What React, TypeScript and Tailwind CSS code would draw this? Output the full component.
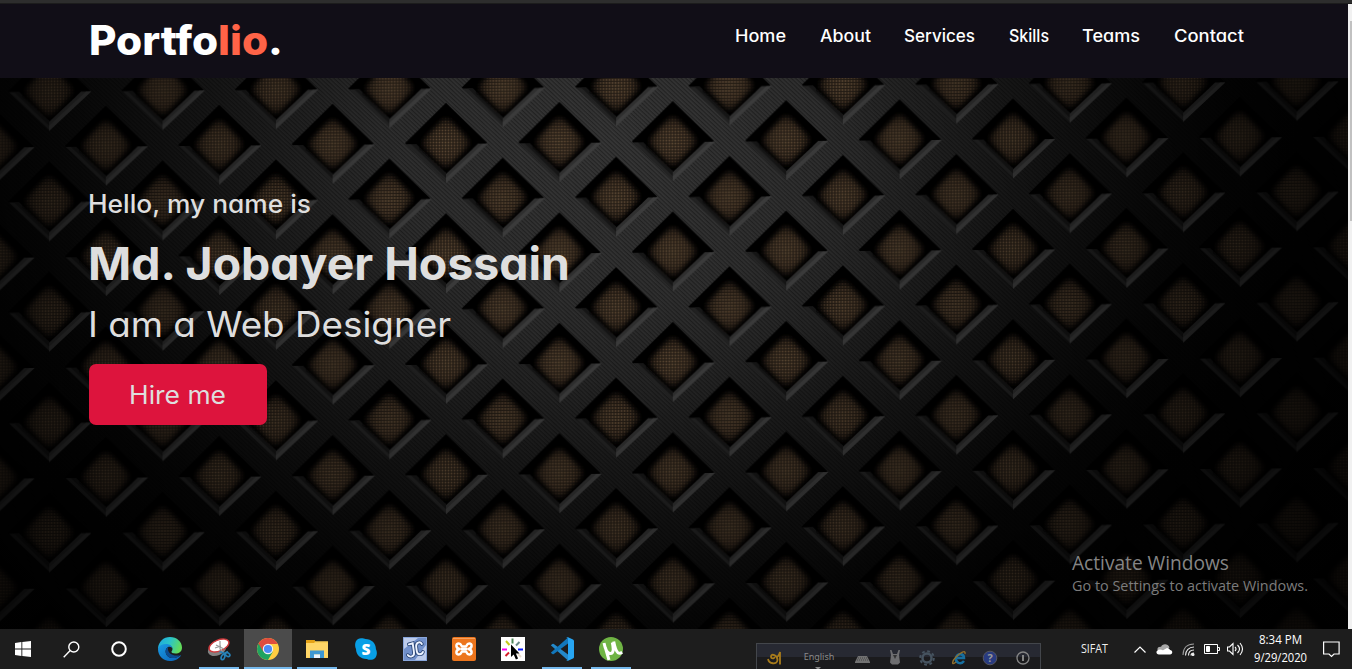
import React from "react";

const navItems = [
  { label: "Home", cls: "w-[51px] mr-[34px]" },
  { label: "About", cls: "w-[51px] mr-[33px]" },
  { label: "Services", cls: "w-[71px] mr-[34px]" },
  { label: "Skills", cls: "w-[40px] mr-[33px]" },
  { label: "Teams", cls: "w-[58px] mr-[34px]" },
  { label: "Contact", cls: "w-[70px]" },
];

/* Text run that is condensed or expanded to an exact width. */
function Fit({ w, h, size, weight, fill = "#fff", base, font = "Inter, sans-serif", children }: {
  w: number; h: number; size: number; weight: number; fill?: string; base: number; font?: string; children: React.ReactNode;
}) {
  return (
    <svg width={w} height={h} className="block overflow-visible">
      <text x="0" y={base} fontFamily={font} fontSize={size} fontWeight={weight} fill={fill} textLength={w} lengthAdjust="spacingAndGlyphs">
        {children}
      </text>
    </svg>
  );
}

function Hole() {
  return (
    <g>
      <path d="M-41 0 L0 -40 L41 0 L0 38Z" fill="#000" />
      <path d="M-40 1 L-30 1 L0 30 L0 39Z" fill="#232323" />
      <path d="M-35 1 L-30 1 L0 30 L0 35Z" fill="#161616" />
      <path d="M42 1 L32 1 L0 31 L0 40Z" fill="#303030" />
      <path d="M42 1 L37 1 L0 35 L0 40Z" fill="#3d3d3d" />
      <path d="M-23 -3 L-3 -24 L3 -24 L23 -3 L23 3 L3 24 L-3 24 L-23 3Z" fill="url(#brown)" filter="url(#soft)" />
      <path d="M-27 -6 L0 -33 L27 -6 L27 6 L0 30 L-27 6Z" fill="url(#weave)" />
    </g>
  );
}

function Lattice() {
  return (
    <svg className="absolute inset-0" width="1348" height="551" viewBox="0 78 1348 551">
      <defs>
        <radialGradient id="brown">
          <stop offset="0" stopColor="#6c563d" />
          <stop offset="0.6" stopColor="#5c4733" />
          <stop offset="1" stopColor="#2a2018" />
        </radialGradient>
        <filter id="soft" x="-30%" y="-30%" width="160%" height="160%">
          <feGaussianBlur stdDeviation="2" />
        </filter>
        <pattern id="weave" width="3" height="3" patternUnits="userSpaceOnUse">
          <path d="M0 1H3M1 0V3" stroke="#000" strokeWidth="1.3" opacity=".64" />
        </pattern>
        <pattern id="rib" width="3" height="3" patternUnits="userSpaceOnUse" patternTransform="rotate(43)">
          <rect width="3" height="3" fill="#373737" />
          <rect width="3" height="1.3" fill="#242424" />
        </pattern>
        <pattern id="cells" width="113.4" height="110.4" patternUnits="userSpaceOnUse" patternTransform="matrix(1 -0.008 0 1 559.4 142)">
          <Hole />
          <g transform="translate(113.4 0)"><Hole /></g>
          <g transform="translate(0 110.4)"><Hole /></g>
          <g transform="translate(113.4 110.4)"><Hole /></g>
          <g transform="translate(56.7 55.2)"><Hole /></g>
        </pattern>
        <radialGradient id="shade" gradientUnits="userSpaceOnUse" cx="0" cy="0" r="1" gradientTransform="translate(610 130) scale(700 590)">
          <stop offset="0" stopColor="#000" stopOpacity="0" />
          <stop offset=".3" stopColor="#000" stopOpacity=".1" />
          <stop offset=".6" stopColor="#000" stopOpacity=".5" />
          <stop offset=".85" stopColor="#000" stopOpacity=".84" />
          <stop offset="1" stopColor="#000" stopOpacity=".96" />
        </radialGradient>
        <radialGradient id="cellShade" gradientUnits="userSpaceOnUse" cx="0" cy="0" r="1" gradientTransform="translate(620 170) scale(800 700)">
          <stop offset="0" stopColor="#000" stopOpacity="0" />
          <stop offset=".3" stopColor="#000" stopOpacity=".06" />
          <stop offset=".6" stopColor="#000" stopOpacity=".34" />
          <stop offset=".8" stopColor="#000" stopOpacity=".6" />
          <stop offset="1" stopColor="#000" stopOpacity=".82" />
        </radialGradient>
      </defs>
      <rect y="78" width="1348" height="551" fill="url(#rib)" />
      <rect y="78" width="1348" height="551" fill="url(#shade)" />
      <rect y="78" width="1348" height="551" fill="url(#cells)" />
      <rect y="78" width="1348" height="551" fill="url(#cellShade)" />
    </svg>
  );
}

const WindowsIcon = () => (
  <svg width="16" height="16" viewBox="0 0 16 16" fill="#fff">
    <path d="M0 2 6.4 1.1V7.5H0ZM7.3 1 16 0V7.5H7.3ZM0 8.4H6.4V14.9L0 14ZM7.3 8.4H16V16L7.3 15Z" />
  </svg>
);
const SearchIcon = () => (
  <svg width="17" height="17" viewBox="0 0 17 17" fill="none" stroke="#fff" strokeWidth="1.4">
    <circle cx="10.8" cy="6" r="5" /><path d="M7.2 9.6.7 16.2" />
  </svg>
);
const CortanaIcon = () => (
  <svg width="16" height="16" viewBox="0 0 16 16" fill="none" stroke="#fff" strokeWidth="2"><circle cx="8" cy="8" r="6.8" /></svg>
);
const EdgeIcon = () => (
  <svg width="24" height="24" viewBox="0 0 24 24">
    <defs>
      <linearGradient id="eg" x1="0" x2="1" y1=".1" y2=".4"><stop stopColor="#1da7e0" /><stop offset=".5" stopColor="#2bc4c9" /><stop offset="1" stopColor="#62dc5a" /></linearGradient>
      <linearGradient id="eb" x1="0" x2="1" y1="0" y2="1"><stop stopColor="#1a9be4" /><stop offset="1" stopColor="#0b62b8" /></linearGradient>
    </defs>
    <path d="M0 11.5C.4 4.8 5.5 0 12 0 19 0 24 5 24 10.5c0 4-3 6-6.500 6-3 0-4.300-1-4-2 .7-.8 1-1.600 1-2.500 0-2.500-2.800-4-6-4C4.500 8 1.500 9.500 0 12.500Z" fill="url(#eg)" />
    <path d="M0 12C1 8.800 4 7 8 7c4 0 6.500 2.200 6.500 5-.3-1.300-1.500-2.200-3-2.200-2.500 0-4.300 2.600-3.800 5.700.5 3.700 4 5.800 7.700 5.500 2.500-.2 5-1.200 6.600-2.600.6-.4 1 0 .7.500C20.600 22 16.500 24 12 24 5 24 0 18.600 0 12Z" fill="url(#eb)" />
    <path d="M7.700 15.500c-.3-2.500.8-4.600 2.700-5.400C9.500 11.500 9.900 14 11.400 15.700c2 2.200 6.400 3.500 10.200 2.500-1.700 2.100-5 3.200-7.700 2.800-3.500-.4-5.800-2.500-6.200-5.500Z" fill="#0c4c91" />
  </svg>
);
const SnipIcon = () => (
  <svg width="24" height="24" viewBox="0 0 24 24">
    <ellipse cx="10" cy="12.500" rx="9.500" ry="6" transform="rotate(-22 10 12.500)" fill="#818181" />
    <ellipse cx="12" cy="8.500" rx="10.500" ry="5.500" transform="rotate(-22 12 8.500)" fill="#fff" stroke="#cf3a3d" strokeWidth="1.400" />
    <path d="M13 4v8l3 3M9 8l8 4M8 11l6-2" stroke="#9a9a9a" strokeWidth="1.200" fill="none" />
    <g fill="none" stroke="#2782b7" strokeWidth="1.700"><ellipse cx="16" cy="20" rx="1.700" ry="2.800" transform="rotate(20 16 20)" /><ellipse cx="20.500" cy="17.500" rx="1.700" ry="2.600" transform="rotate(-55 20.500 17.500)" /><path d="m12.500 14.500 5.500 2 3-2" /></g>
  </svg>
);
const ChromeIcon = () => (
  <svg width="22" height="22" viewBox="0 0 22 22">
    <circle cx="11" cy="11" r="11" fill="#ffcd41" />
    <path d="M11 11 1.500 5.500A11 11 0 0 0 11 22L15.800 13.700Z" fill="#20a360" />
    <path d="M1.470 5.500A11 11 0 0 1 20.530 5.500L20.600 6H11L6.300 13.700Z" fill="#df4c3e" />
    <circle cx="11" cy="11" r="5.200" fill="#f4f4f4" /><circle cx="11" cy="11" r="4.100" fill="#4c8bf5" />
  </svg>
);
const FolderIcon = () => (
  <svg width="22" height="18" viewBox="0 0 22 18">
    <path d="M0 0H8l1.500 1.300H22V18H0Z" fill="#f9ce57" /><path d="M0 0H8l1.500 1.300L8 3H0Z" fill="#e5a216" />
    <path d="M0 3H22V17.500H0Z" fill="#ffd667" /><path d="M4 18V10.500H18V18H14V14.500H8V18Z" fill="#3d97d3" /><path d="M8 14.500h6V18H8Z" fill="#e9f3ff" />
  </svg>
);
const SkypeIcon = () => (
  <svg width="22" height="22" viewBox="0 0 22 22">
    <path d="M6 .3C8 .2 9.500 1 10.500 1c6 0 10.500 4.300 10.400 10 1.500 3 1.200 6.400-.5 8.700-2.300 2.500-6 2.700-8.500 1.300C6 21.300 1 17 1 11 0 9-.3 6 .8 3.500 2 1.400 4 .3 6 .3Z" fill="#089fe6" />
    <text x="11" y="16.500" textAnchor="middle" fontFamily="Open Sans, sans-serif" fontSize="15.500" fontWeight="800" fill="#fff">S</text>
  </svg>
);
const JCIcon = () => (
  <svg width="24" height="24" viewBox="0 0 24 24">
    <rect width="24" height="24" fill="#7190ca" /><path d="M1 1H15L1 12ZM23 8V23H12Z" fill="#bdcceb" /><path d="M.5.5h23v23H.5Z" fill="none" stroke="#8aa7dc" />
    <g fill="none" strokeLinecap="round" transform="rotate(-8 12 12)"><path d="M6.500 6.500 10.500 6v9.500c0 4-5 4.500-6.500 1.500M19.500 8c-1.500-3.500-6-2-6 2v4.500c0 4 4.500 4.500 6 1.500" stroke="#294575" strokeWidth="3.600" /><path d="M6.500 6.500 10.500 6v9.500c0 4-5 4.500-6.500 1.500M19.500 8c-1.500-3.500-6-2-6 2v4.500c0 4 4.500 4.500 6 1.500" stroke="#edf3ff" strokeWidth="1.900" /></g>
  </svg>
);
const XamppIcon = () => (
  <svg width="24" height="24" viewBox="0 0 24 24">
    <rect width="24" height="24" rx="2" fill="#ec751d" /><path d="M1 1.500H23" stroke="#f6a260" />
    <path d="M8.500 12H15.500" stroke="#fff" strokeWidth="2.600" />
    <path d="M7.500 12C3.500 11 3.500 6.500 6.800 6.500 9.500 6.500 9 9 10 9.500H14C15 9 14.500 6.500 17.200 6.500 20.500 6.500 20.500 11 16.500 12 20.500 13 20.500 17.500 17.200 17.500 14.500 17.500 15 15 14 14.500H10C9 15 9.500 17.500 6.800 17.500 3.500 17.500 3.500 13 7.500 12Z" fill="none" stroke="#fff" strokeWidth="2.500" strokeLinejoin="round" />
  </svg>
);
const ClickIcon = () => (
  <svg width="24" height="24" viewBox="0 0 24 24">
    <rect width="24" height="24" fill="#fff" />
    <g strokeWidth="2"><path d="M11.500 1.500v5" stroke="#4c8657" /><path d="m5 4 3.500 4" stroke="#c7c91a" /><path d="m18.500 5-3.500 3.500" stroke="#698989" /><path d="M1 12.500h5" stroke="#ff00f2" /><path d="M17 12.500h5" stroke="#0b1cff" /><path d="m4.500 19 3.500-3.500" stroke="#d61b26" /><path d="M17 17l3 3" stroke="#e7d9ca" /></g>
    <path d="M10 7.500V20l2.700-2.500 2.200 5 2.200-1-2.200-4.900h3.600Z" fill="#000" />
  </svg>
);
const CodeIcon = () => (
  <svg width="24" height="24" viewBox="0 0 24 24">
    <path d="M.8 8.300 2.400 6.900q.7-.5 1.400 0L18 17.500V23.500Z" fill="#2489ca" />
    <path d="M.8 15.700 2.400 17.100q.7.500 1.400 0L18 6.500V.5Z" fill="#1277bb" />
    <path d="M17.500 0 23 2.500q1 .5 1 1.500V20q0 1-1 1.500L17.500 24q-1 .2-1.600-.5 2.100.6 2.100-1.500V2q0-2.100-2.100-1.500.6-.7 1.600-.5Z" fill="#27a5f2" />
  </svg>
);
const TorrentIcon = () => (
  <svg width="24" height="24" viewBox="0 0 24 24">
    <circle cx="12" cy="12" r="12" fill="#6fb444" /><path d="M5 6c1.500 7 3 10.500 6.500 10.500S14.500 11 13.300 5.500M14.700 4.500c1 5 2.500 10 4.300 11.200 1.300.8 3 .3 4.200-.5M6.500 11l3.500 12" fill="none" stroke="#fff" strokeWidth="3" />
  </svg>
);

const tasks = [
  { icon: <EdgeIcon />, open: false }, { icon: <SnipIcon />, open: true },
  { icon: <ChromeIcon />, open: true, active: true }, { icon: <FolderIcon />, open: true },
  { icon: <SkypeIcon />, open: false }, { icon: <JCIcon />, open: false },
  { icon: <XamppIcon />, open: false }, { icon: <ClickIcon />, open: false },
  { icon: <CodeIcon />, open: true }, { icon: <TorrentIcon />, open: true },
];

function LanguageBar() {
  return (
    <div className="ml-[121px] mt-[14px] flex h-[26px] w-[285px] shrink-0 items-center border border-b-0 border-[#43464b] bg-linear-to-b from-[#272932] from-50% to-[#1b1b1d] to-50% pt-[2px]">
      <svg className="ml-[10px]" width="15" height="14" viewBox="0 0 15 14" fill="none" stroke="#a77b1b" strokeWidth="1.800"><path d="M1 8c1 5 9 6 9.500 1C10.500 4 4 2 4 5.500 4 8 7.500 8 7.500 6M9.500 6C11 6 12 4 13 1v12.500" /></svg>
      <div className="relative ml-[21px] mb-[1px] w-[32px] text-center font-[Noto_Sans,sans-serif] text-[9px] text-[#8a8a8a]">English
        <svg className="absolute left-[12px] top-[17px]" width="6" height="3"><path d="M0 0h6L3 3Z" fill="#888" /></svg>
      </div>
      <svg className="ml-[20px] mt-1" width="16" height="8"><path d="M3 0h9l3 6v1H0V6Z" fill="#727272" /><path d="M3 2h10M2 4h11" stroke="#444" strokeDasharray="1 1" /></svg>
      <svg className="ml-[18px]" width="12" height="15"><path d="M1 0h1.500l1.500 4h4l1.500-4H11l-1 5 1 7.500-2 2H3l-2-2L2 5Z" fill="#6e6e70" /><path d="M4 5h4L6 9Z" fill="#333" /></svg>
      <svg className="ml-[18px]" width="16" height="16" viewBox="0 0 16 16" fill="none" stroke="#46535f"><circle cx="8" cy="8" r="4.500" strokeWidth="2.500" /><circle cx="8" cy="8" r="6.800" strokeWidth="2" strokeDasharray="2.800 2.540" /></svg>
      <svg className="ml-[16px]" width="17" height="16" viewBox="0 0 17 16" fill="none"><path d="M13 11c-3 4-9 2-8-3s8-5 8 0H5" stroke="#176fa0" strokeWidth="2.500" /><path d="M5 12c-5 4-4-1 0-5S15-1 14 4" stroke="#92702c" strokeWidth="1.400" /></svg>
      <svg className="ml-[14px]" width="16" height="16"><circle cx="8" cy="8" r="6.800" fill="#293b80" stroke="#55555f" /><text x="8" y="12" textAnchor="middle" fill="#999" fontSize="11" fontWeight="700" fontFamily="Open Sans, sans-serif">?</text></svg>
      <svg className="ml-[18px]" width="14" height="14" fill="none" stroke="#858585" strokeWidth="1.300"><circle cx="7" cy="7" r="6" /><path d="M7 4v6" strokeWidth="2" /></svg>
    </div>
  );
}

function Tray() {
  return (
    <div className="ml-auto flex h-full shrink-0 items-center">
      <Fit w={27} h={16} size={12} weight={400} base={12} font="Open Sans, sans-serif" fill="#eee">SIFAT</Fit>
      <svg className="ml-[26px]" width="12" height="7" fill="none" stroke="#fff" strokeWidth="1.200"><path d="m.5 6.500 5.500-5.500 5.500 5.500" /></svg>
      <svg className="ml-[10px]" width="17" height="11"><path d="M1.500 6C1 3 4 2.500 5 3c1-3.500 7-4 8.500.5L8 7Z" fill="#a8a8a8" /><path d="M3 10.500C-1 10 0 5.500 4 5.500c1 0 2 .2 3 .7l4-2.200c2 0 2.500 1 3 2 3 .5 3 4 0 4.500Z" fill="#fff" /></svg>
      <svg className="ml-[9px]" width="13" height="13" fill="none" stroke="#eee" strokeWidth="1.100"><path d="M1 12C1 5 5 1 12 1" opacity=".6" /><path d="M3.500 12.500c0-5 3.500-8.500 8.500-8.500M6.500 12.500c0-3.500 2-5.500 5.500-5.500M9 12.500C9 11 10 10 12 10" /><circle cx="11" cy="11.500" r="1" fill="#fff" /></svg>
      <svg className="ml-[9px]" width="16" height="10" fill="none" stroke="#fff"><path d="M.5 .5h13v9H.5ZM14 3.500h1.500v3H14" /><path d="M2.500 2.500h3v5h-3Z" fill="#fff" /></svg>
      <svg className="ml-[7px]" width="17" height="14" fill="none" stroke="#fff" strokeWidth="1.100"><path d="M.5 5h2L6 1.500v11L2.500 9h-2Z" /><path d="M8 5q2 2 0 4M10.500 3q4 4 0 8M13 1q5 6 0 12" /></svg>
      <div className="ml-[9px] flex w-[54px] flex-col items-center gap-[2px]">
        <Fit w={43} h={16} size={12} weight={400} base={12} font="Open Sans, sans-serif">8:34 PM</Fit>
        <Fit w={53} h={16} size={12} weight={400} base={12} font="Open Sans, sans-serif">9/29/2020</Fit>
      </div>
      <svg className="ml-[16px] mr-[12px]" width="17" height="17" fill="none" stroke="#fff" strokeWidth="1.200"><path d="M.6 1h15.500v12H11l-2.500 2.500L6 13H.6Z" /></svg>
    </div>
  );
}

export default function App() {
  return (
    <div className="flex h-[669px] w-[1352px] flex-col overflow-hidden bg-black">
      <div className="h-[4px] shrink-0 border-b border-[#1c1c1c] bg-[#2d2d2d]" />
      <div className="flex h-[625px] shrink-0 [font-feature-settings:'cv11']">
        <div className="flex w-[1348px] flex-col">
          <header className="flex h-[74px] shrink-0 items-start bg-[#110e17] pl-[89px]">
            <h1 className="mt-[14px]">
              <Fit w={194} h={46} size={40.5} weight={800} base={37}>Portfo<tspan fill="#ff6347">lio</tspan>.</Fit>
            </h1>
            <nav className="ml-[452px] mt-[20px] flex">
              {navItems.map((n) => (
                <a key={n.label} className={n.cls}>
                  <svg className="block h-[24px] w-full overflow-visible">
                    <text x="0" y="18" fontFamily="Inter, sans-serif" fontSize="17" fontWeight="500" fill="#fff" textLength="100%" lengthAdjust="spacingAndGlyphs">{n.label}</text>
                  </svg>
                </a>
              ))}
            </nav>
          </header>
          <main className="relative h-[551px]">
            <Lattice />
            <section className="relative flex flex-col items-start pl-[88px] pt-[108px]">
              <p><Fit w={223} h={36} size={25} weight={500} fill="#dedede" base={27}>Hello, my name is</Fit></p>
              <h2 className="mt-[16px]"><Fit w={482} h={58} size={45} weight={700} fill="#dedede" base={42}>Md. Jobayer Hossain</Fit></h2>
              <p className="mt-[4px]"><Fit w={363} h={52} size={35} weight={400} fill="#dedede" base={37}>I am a Web Designer</Fit></p>
              <button className="ml-px mt-[12px] flex h-[61px] w-[178px] items-center justify-center rounded-[7px] bg-[#dd143d] pr-[2px]">
                <Fit w={97} h={36} size={25} weight={400} fill="#dedede" base={27}>Hire me</Fit>
              </button>
            </section>
            <div className="absolute left-[1072px] top-[471px]">
              <Fit w={157} h={28} size={19.5} weight={400} fill="#858585" base={21} font="Open Sans, sans-serif">Activate Windows</Fit>
              <Fit w={236} h={20} size={14.5} weight={400} fill="#7c7c7c" base={14} font="Open Sans, sans-serif">Go to Settings to activate Windows.</Fit>
            </div>
          </main>
        </div>
        <div className="flex w-[4px] flex-col items-end bg-[#f1f1f1] pt-[17px]">
          <div className="h-[200px] w-[2px] bg-[#c1c1c1]" />
        </div>
      </div>
      <footer className="flex h-[40px] shrink-0 items-start bg-[#1d1d1d]">
        <div className="flex h-full w-[46px] items-center justify-center"><WindowsIcon /></div>
        <div className="flex h-full w-[50px] items-center justify-center"><SearchIcon /></div>
        <div className="flex h-full w-[46px] items-center justify-center"><CortanaIcon /></div>
        <div className="ml-[4px] flex h-full gap-px">
          {tasks.map((t, i) => (
            <div key={i} className={`flex h-full w-[48px] flex-col items-center ${t.active ? "bg-[#4b4b4b]" : ""}`}>
              <div className="flex h-[38px] items-center pt-[2px]">{t.icon}</div>
              <div className={`h-[2px] ${t.active ? "w-[48px]" : "w-[40px]"} ${t.open ? "bg-[#76b9ed]" : ""}`} />
            </div>
          ))}
        </div>
        <LanguageBar />
        <Tray />
      </footer>
    </div>
  );
}
